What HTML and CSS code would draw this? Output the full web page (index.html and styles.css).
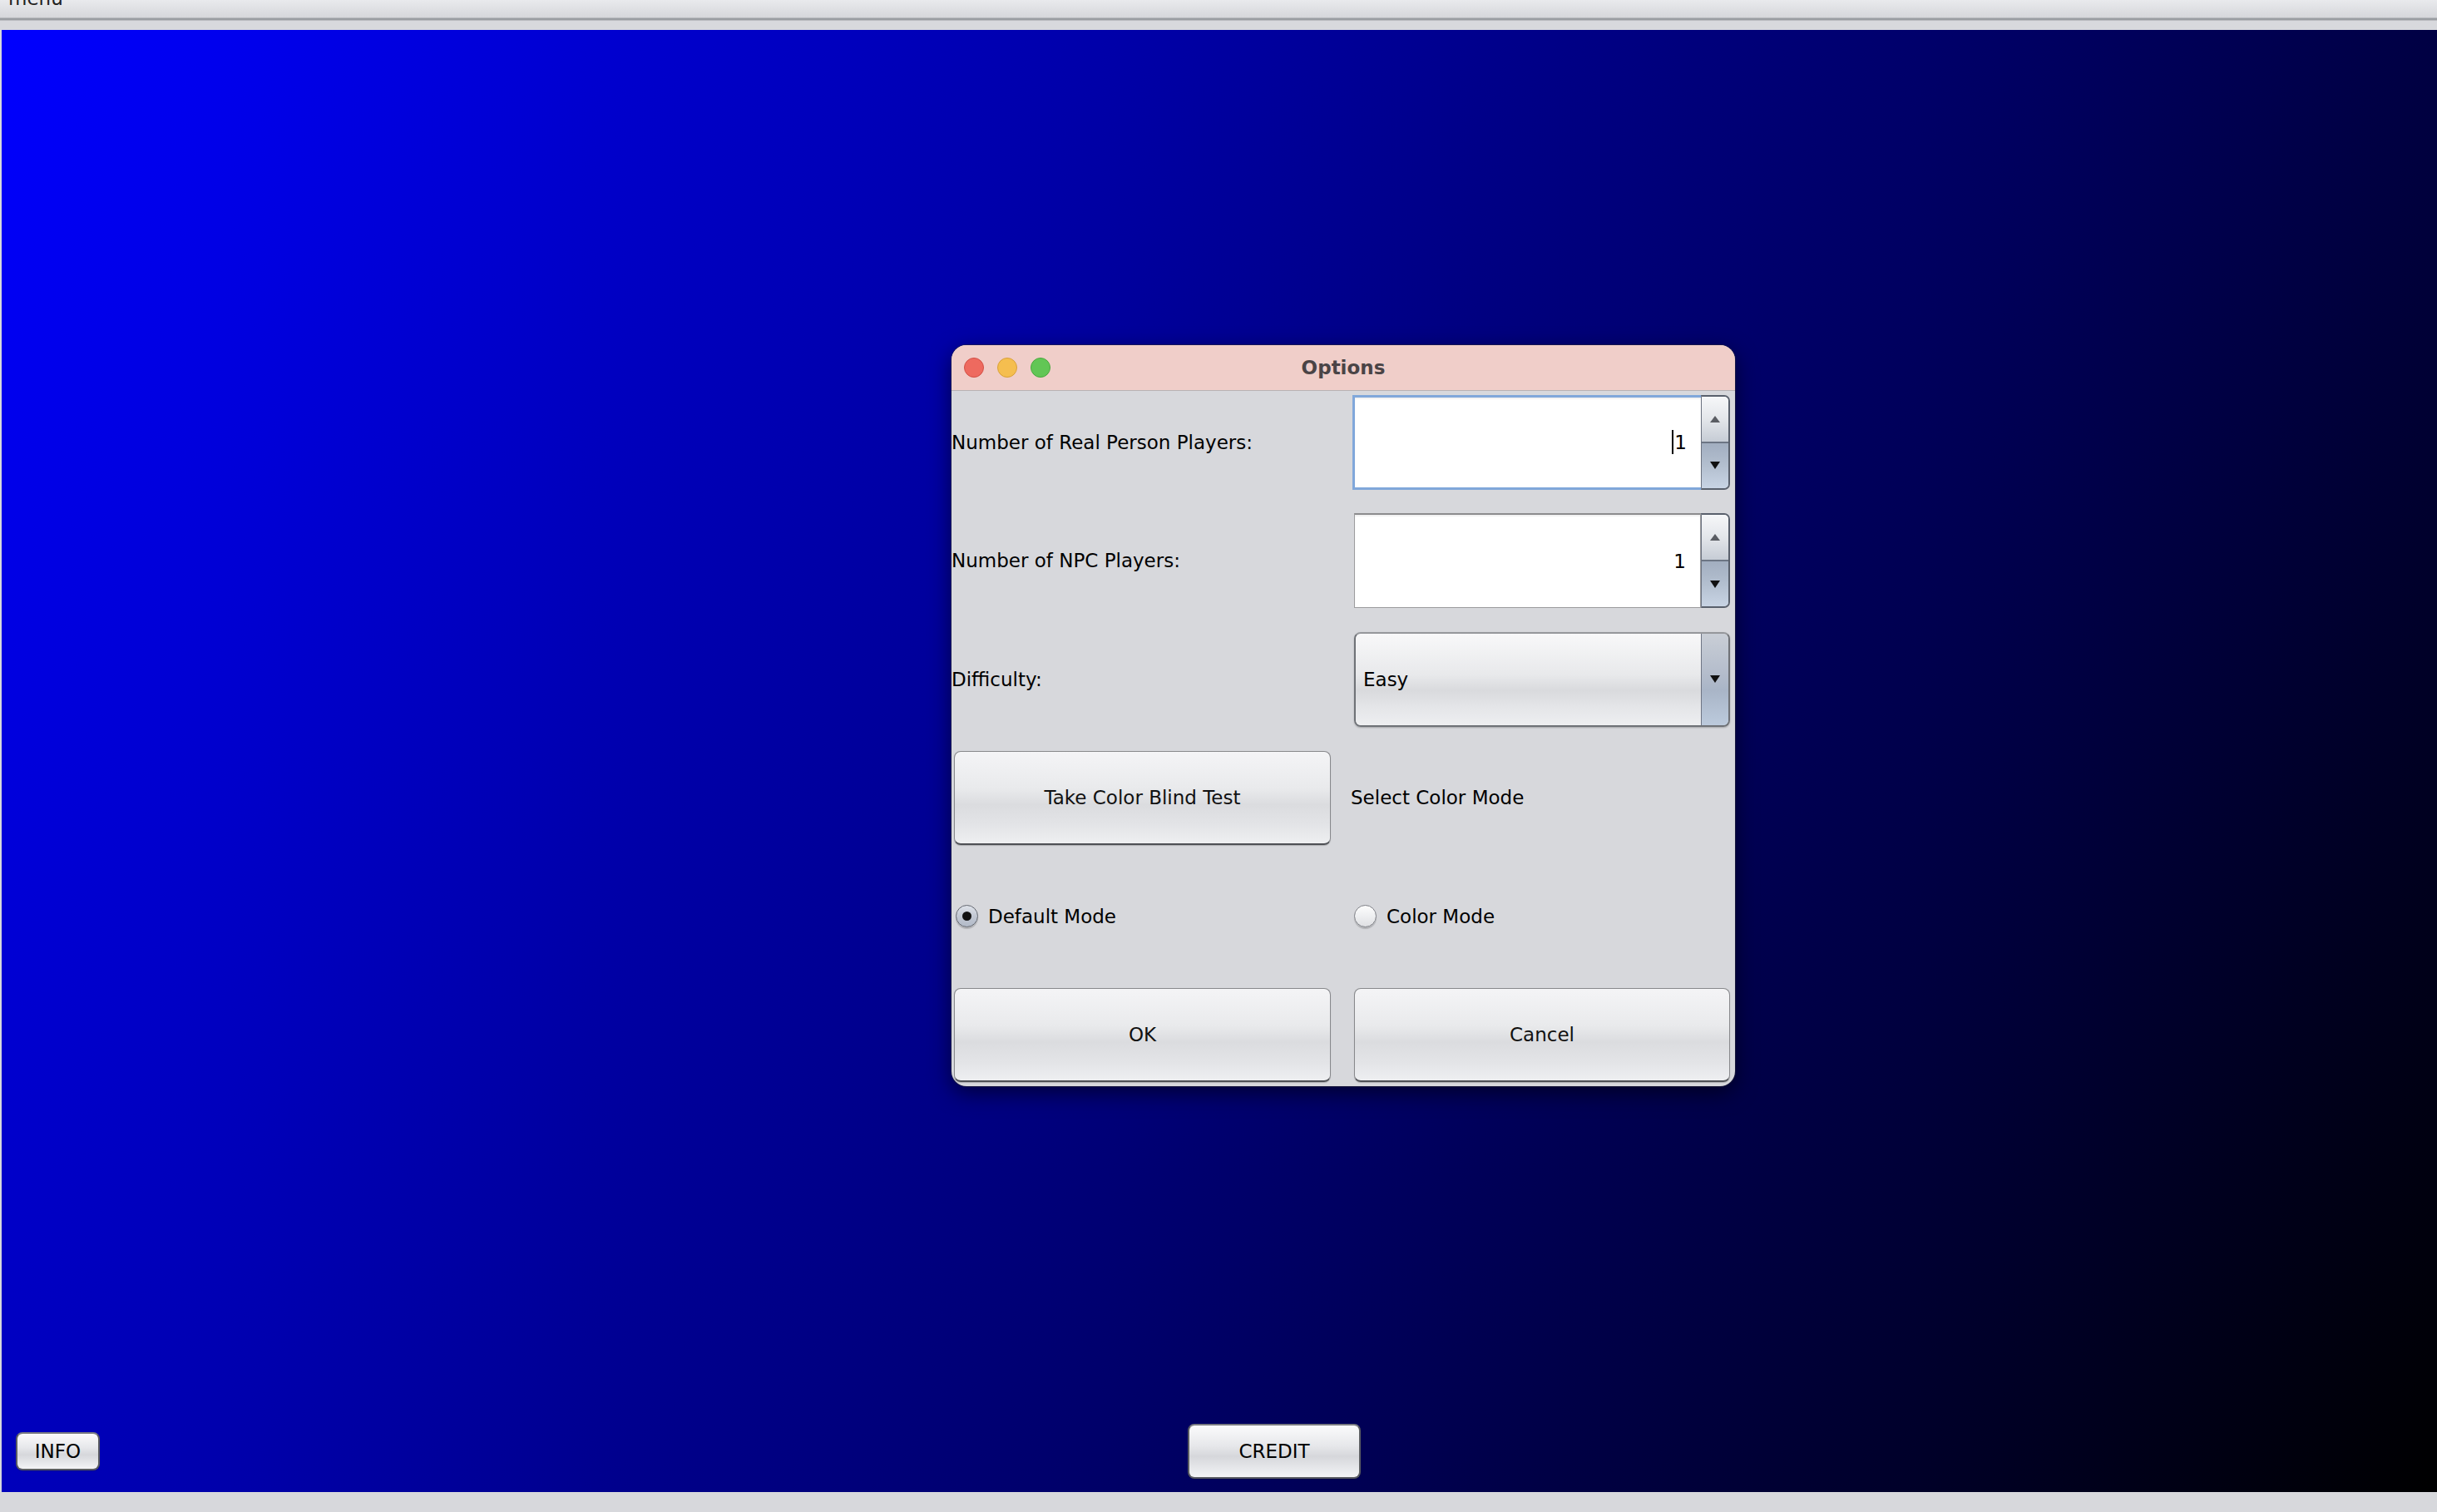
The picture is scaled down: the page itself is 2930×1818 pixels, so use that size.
FILE: index.html
```html
<!DOCTYPE html>
<html lang="en">
<head>
<meta charset="utf-8">
<title>menu</title>
<link rel="stylesheet" href="styles.css">
</head>
<body>
<div class="menubar"><span class="menu-label">menu</span></div>
<div class="desktop">
  <div class="dialog">
    <div class="titlebar">
      <div class="lights">
        <span class="light red"></span>
        <span class="light yellow"></span>
        <span class="light green"></span>
      </div>
      <div class="title">Options</div>
      <div></div>
    </div>
    <div class="form">
      <div class="cell label">Number of Real Person Players:</div>
      <div class="cell right">
        <div class="spinner focused">
          <div class="field"><span class="caret"></span>1</div>
          <div class="arrows">
            <div class="arrow-up"><span class="tri-up"></span></div>
            <div class="arrow-down"><span class="tri-down"></span></div>
          </div>
        </div>
      </div>

      <div class="cell label">Number of NPC Players:</div>
      <div class="cell right">
        <div class="spinner">
          <div class="field">1</div>
          <div class="arrows">
            <div class="arrow-up"><span class="tri-up"></span></div>
            <div class="arrow-down"><span class="tri-down"></span></div>
          </div>
        </div>
      </div>

      <div class="cell label">Difficulty:</div>
      <div class="cell right">
        <div class="combo">
          <div class="combo-value">Easy</div>
          <div class="combo-arrow"><span class="tri-down"></span></div>
        </div>
      </div>

      <div class="cell left">
        <button class="btn big">Take Color Blind Test</button>
      </div>
      <div class="cell right text-right">Select Color Mode</div>

      <div class="cell left radio-cell">
        <span class="radio checked"></span><span class="radio-text">Default Mode</span>
      </div>
      <div class="cell right radio-cell">
        <span class="radio"></span><span class="radio-text">Color Mode</span>
      </div>

      <div class="cell left">
        <button class="btn big">OK</button>
      </div>
      <div class="cell right">
        <button class="btn big">Cancel</button>
      </div>
    </div>
  </div>

  <div class="bottom-bar">
    <div class="info-cell"><button class="btn small info">INFO</button></div>
    <div class="credit-cell"><button class="btn small credit">CREDIT</button></div>
  </div>
</div>
<div class="statusbar"></div>
</body>
</html>
```

FILE: styles.css
```css
* {
  box-sizing: border-box;
}

html, body {
  margin: 0;
  padding: 0;
}

body {
  width: 2930px;
  height: 1818px;
  overflow: hidden;
  background: #d7d8dc;
  font-family: "DejaVu Sans", "Liberation Sans", sans-serif;
  font-size: 23px;
  color: #000;
}

/* ---------- top menu strip ---------- */
.menubar {
  height: 36px;
  background:
    linear-gradient(#e9eaed 0px, #d6d7db 21px, #9a9da2 22px, #9a9da2 24px, #d8d9dd 25px, #d8d9dd 36px);
  padding-left: 10px;
  overflow: hidden;
}

.menu-label {
  display: block;
  line-height: 23px;
  margin-top: -13px;
  color: #222;
}

/* ---------- blue desktop ---------- */
.desktop {
  position: relative;
  margin-left: 2px;
  height: 1758px;
  background: linear-gradient(120.98deg, #0000ff 0%, #000000 100%);
  display: flex;
  flex-direction: column;
  justify-content: flex-end;
}

.statusbar {
  height: 24px;
  background: #d7d8dc;
}

/* ---------- dialog window ---------- */
.dialog {
  position: absolute;
  left: 1142px;
  top: 379px;
  width: 942px;
  height: 891px;
  background: #d7d8dc;
  border-radius: 18px;
  overflow: hidden;
  box-shadow: 0 0 0 1px rgba(40, 40, 60, 0.55), 0 8px 26px rgba(0, 0, 0, 0.55);
}

.titlebar {
  height: 55px;
  background: #f0cec9;
  border-bottom: 1px solid #b9b2b4;
  display: grid;
  grid-template-columns: 1fr auto 1fr;
  align-items: center;
}

.lights {
  display: flex;
  gap: 16px;
  padding-left: 15px;
}

.light {
  width: 24px;
  height: 24px;
  border-radius: 50%;
}

.light.red {
  background: #ee6a5f;
  border: 1px solid #d25046;
}

.light.yellow {
  background: #f5be4f;
  border: 1px solid #d8a03a;
}

.light.green {
  background: #62c655;
  border: 1px solid #4aa83f;
}

.title {
  font-weight: bold;
  color: #4a4446;
  font-size: 23px;
}

/* ---------- grid form ---------- */
.form {
  display: grid;
  grid-template-columns: 471px 471px;
  grid-template-rows: repeat(6, 115px);
  row-gap: 27.6px;
  padding-top: 4px;
}

.cell {
  display: flex;
  align-items: center;
  min-width: 0;
}

.cell.label {
  padding-left: 0;
  color: #000;
}

.cell.left {
  padding: 0 15px 0 3px;
}

.cell.right {
  padding: 0 6px 0 13px;
}

.cell.text-right {
  padding-left: 9px;
}

.cell.left.radio-cell {
  padding-left: 5px;
}

/* ---------- spinner ---------- */
.spinner {
  display: flex;
  width: 100%;
  height: 114px;
}

.field {
  flex: 1;
  background: #fff;
  border: 1px solid #9c9c9e;
  border-top: 2px solid #8c8c8e;
  box-shadow: inset 0 2px 2px rgba(0, 0, 0, 0.06);
  display: flex;
  align-items: center;
  justify-content: flex-end;
  padding-right: 17px;
  font-size: 23px;
  position: relative;
}

.spinner.focused .field {
  border: 3px solid #80a7da;
  border-right: none;
  padding-right: 17px;
  margin-left: -2px;
}

.caret {
  display: inline-block;
  width: 2px;
  height: 29px;
  background: #000;
  margin-right: 1px;
}

.arrows {
  width: 35px;
  display: flex;
  flex-direction: column;
  border: 2px solid #59606c;
  border-left: 1px solid #6b7280;
  border-radius: 0 7px 7px 0;
  overflow: hidden;
}

.arrow-up {
  flex: 1;
  background: linear-gradient(#f6f7f9, #e3e6ea 50%, #c6ccd5);
  border-bottom: 2px solid #6c7584;
  display: flex;
  align-items: center;
  justify-content: center;
}

.arrow-down {
  flex: 1;
  background: linear-gradient(#a2aec0, #b3bfcf 50%, #c8d4e4);
  display: flex;
  align-items: center;
  justify-content: center;
}

.tri-up {
  width: 0;
  height: 0;
  border-left: 6px solid transparent;
  border-right: 6px solid transparent;
  border-bottom: 8px solid #5a5d63;
}

.tri-down {
  width: 0;
  height: 0;
  border-left: 6px solid transparent;
  border-right: 6px solid transparent;
  border-top: 9px solid #111;
}

/* ---------- combo ---------- */
.combo {
  width: 100%;
  height: 114px;
  display: flex;
  border: 2px solid #6f7277;
  border-top-color: #95979b;
  border-radius: 8px;
  overflow: hidden;
  box-shadow: 0 1px 2px rgba(0, 0, 0, 0.25);
}

.combo-value {
  flex: 1;
  display: flex;
  align-items: center;
  padding-left: 9px;
  background: linear-gradient(#f8f8f9, #e8e9eb 45%, #d9dadd 62%, #e4e5e8 80%, #eeeff1);
}

.combo-arrow {
  width: 33px;
  border-left: 1px solid #6e7584;
  background: linear-gradient(#c9ced6, #b3bccb 45%, #a9b5c7 62%, #bccadc);
  display: flex;
  align-items: center;
  justify-content: center;
}

/* ---------- buttons ---------- */
.btn {
  font-family: "DejaVu Sans", "Liberation Sans", sans-serif;
  font-size: 23px;
  color: #111;
  background: linear-gradient(#f4f4f6, #e9eaec 40%, #dbdcdf 58%, #e3e4e7 80%, #eeeff1);
  border: 1px solid #88898c;
  border-bottom: 2px solid #4e5055;
  border-radius: 8px;
  padding: 0;
  box-shadow: 0 1px 1px rgba(0, 0, 0, 0.2);
}

.btn.big {
  width: 100%;
  height: 113px;
}

.bottom-bar {
  height: 66px;
  margin-bottom: 16px;
  display: flex;
  align-items: center;
}

.info-cell {
  width: 132px;
  padding-left: 17px;
}

.credit-cell {
  flex: 1;
  display: flex;
  justify-content: center;
}

.btn.small {
  font-size: 23px;
  color: #000;
  border: 2px solid #5a5c62;
  border-top-color: #7b7d82;
  background: linear-gradient(#fbfbfc, #e6e7ea 40%, #d6d7db 60%, #e8e9ec 85%, #f4f4f6);
}

.btn.info {
  width: 101px;
  height: 46px;
}

.btn.credit {
  width: 208px;
  height: 66px;
}

/* ---------- radios ---------- */
.radio-cell {
  gap: 12px;
}

.radio {
  width: 27px;
  height: 27px;
  border-radius: 50%;
  border: 1px solid #7e8086;
  background: linear-gradient(#fdfdfd, #eeeff1 50%, #dfe0e3);
  box-shadow: 0 2px 1px rgba(0, 0, 0, 0.18);
  display: flex;
  align-items: center;
  justify-content: center;
}

.radio.checked {
  border-color: #62666e;
  background: linear-gradient(#dfe3ea, #c2c8d3 50%, #b2bac8);
}

.radio.checked::after {
  content: "";
  width: 11px;
  height: 11px;
  border-radius: 50%;
  background: #111;
}

.radio-text {
  color: #000;
}
```
